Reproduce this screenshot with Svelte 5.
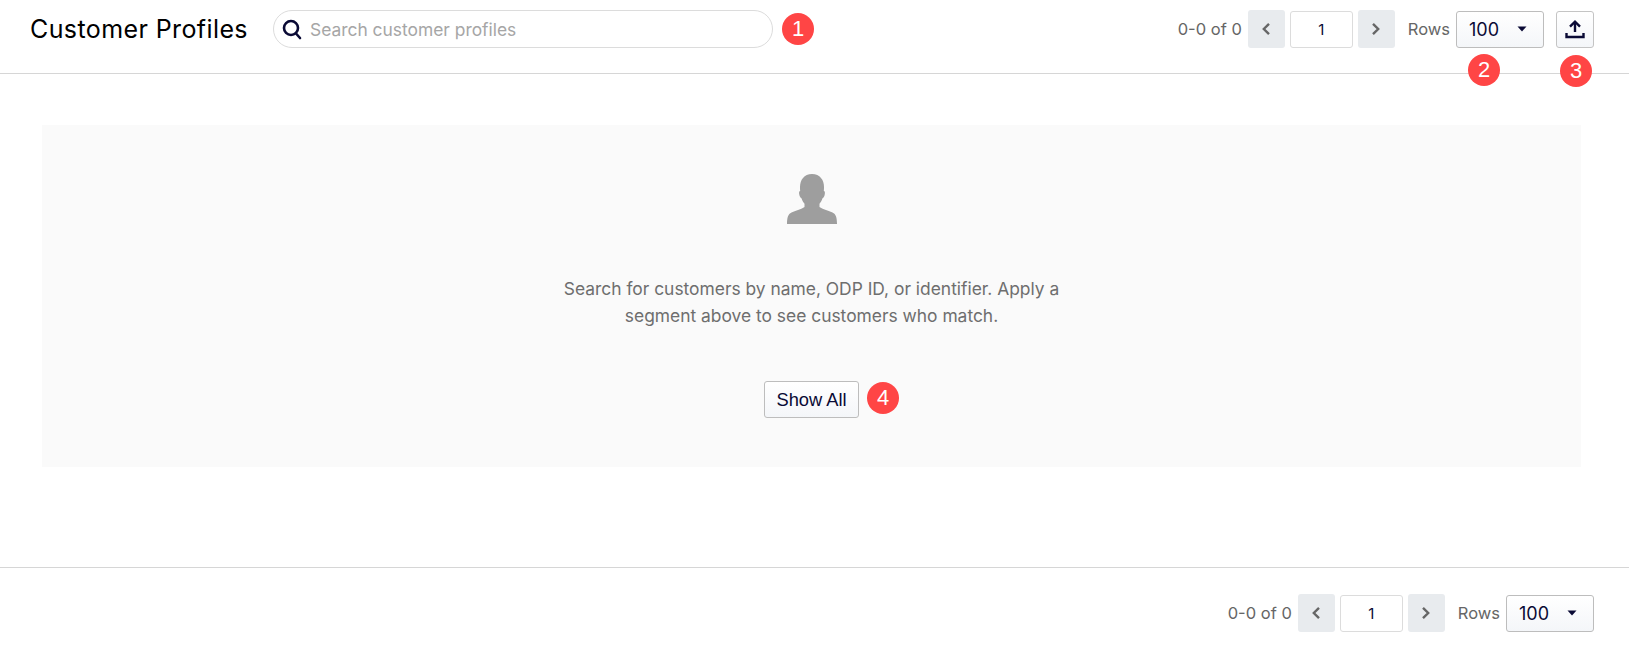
<script>
  const pager = { range: '0-0 of 0', page: 1, rows: 100 }
</script>

{#snippet pagination()}
  <span class="range">{pager.range}</span>
  <button class="step" aria-label="Previous page">
    <svg width="12" height="14" viewBox="0 0 12 14" fill="none" stroke="currentColor" stroke-width="2.4"><polyline points="9,1.800 3.800,7 9,12.200"></polyline></svg>
  </button>
  <input class="page-input" value={pager.page} aria-label="Page" />
  <button class="step" aria-label="Next page">
    <svg width="12" height="14" viewBox="0 0 12 14" fill="none" stroke="currentColor" stroke-width="2.4"><polyline points="3,1.800 8.200,7 3,12.200"></polyline></svg>
  </button>
  <span class="rows-label">Rows</span>
  <button class="select">
    <span>{pager.rows}</span>
    <svg width="10" height="6" viewBox="0 0 10 6"><path d="M0.5 0.5h9L5 5.5z" fill="#0a0a35"></path></svg>
  </button>
{/snippet}

<div class="page">
  <header class="toolbar">
    <h1>Customer Profiles</h1>
    <div class="search">
      <svg width="22" height="22" viewBox="0 0 22 22" fill="none" stroke="#0a0a35" stroke-width="2.6" stroke-linecap="round">
        <circle cx="10" cy="10" r="7"></circle>
        <line x1="15" y1="15.500" x2="19" y2="20"></line>
      </svg>
      <span class="placeholder">Search customer profiles</span>
      <span class="badge badge-1">1</span>
    </div>
    <div class="pager">
      {@render pagination()}
      <button class="upload" aria-label="Upload">
        <svg width="20" height="20" viewBox="0 0 20 20" fill="none" stroke="#0a0a35" stroke-width="2.400">
          <path d="M10 13V3"></path>
          <polyline points="5,7.600 10,2.600 15,7.600"></polyline>
          <path d="M1.500 14v4h17v-4"></path>
        </svg>
      </button>
      <span class="badge badge-2">2</span>
      <span class="badge badge-3">3</span>
    </div>
  </header>

  <main>
    <section class="empty">
      <svg class="person" width="50" height="50" viewBox="0 0 50 50">
        <path fill="#9e9e9e" d="M25 0c8 0 12 6 12 13 0 1 0 3-.2 4 1.200 0 1.500 2 .7 4.500-.5 1.500-1.200 2.500-2 2.800-.6 2.200-1.700 4-3 5.500v3.200c3 2 8 3.500 13 5.500C49 40 50 44 50 50H0c0-6 1-10 4.500-11.500 5-2 10-3.500 13-5.500v-3.200c-1.300-1.500-2.400-3.300-3-5.500-.8-.3-1.500-1.300-2-2.800-.8-2.500-.5-4.500.7-4.500-.2-1-.2-3-.2-4C13 6 17 0 25 0z"></path>
      </svg>
      <p>Search for customers by name, ODP ID, or identifier. Apply a segment above to see customers who match.</p>
      <div class="action">
        <button class="show-all">Show All</button>
        <span class="badge badge-4">4</span>
      </div>
    </section>
  </main>

  <footer class="bottom">
    <div class="pager">
      {@render pagination()}
    </div>
  </footer>
</div>

<style>
  :global(body) {
    background: #fff;
    font-family: Inter, "Liberation Sans", sans-serif;
    overflow: hidden;
  }

  .page {
    display: flex;
    flex-direction: column;
    height: 649px;
  }

  .toolbar {
    display: flex;
    align-items: flex-start;
    height: 74px;
    padding: 10px 35px 0 30px;
    box-sizing: border-box;
    border-bottom: 1px solid #d6d6d6;
    flex-shrink: 0;
  }

  h1 {
    margin: 0;
    width: 243px;
    font-size: 25px;
    line-height: 38px;
    font-weight: 400;
    color: #000;
    letter-spacing: 0.4px;
    white-space: nowrap;
  }

  .search {
    position: relative;
    display: flex;
    align-items: center;
    gap: 7px;
    width: 500px;
    height: 38px;
    padding-left: 7px;
    box-sizing: border-box;
    border: 1px solid #dcdcdc;
    border-radius: 19px;
  }

  .placeholder {
    font-size: 17.400px;
    color: #a6a6a6;
  }

  .pager {
    position: relative;
    display: flex;
    align-items: center;
    margin-left: auto;
    height: 38px;
    color: #666;
    font-size: 16.500px;
  }

  .range {
    margin-right: 6px;
    white-space: nowrap;
  }

  .step {
    display: flex;
    align-items: center;
    justify-content: center;
    width: 37px;
    height: 38px;
    padding: 0;
    border: none;
    border-radius: 3px;
    background: #e8ebee;
    color: #666;
  }

  .page-input {
    width: 63px;
    height: 37px;
    margin: 0 5px;
    padding: 0;
    box-sizing: border-box;
    border: 1px solid #dcdcdc;
    border-radius: 3px;
    background: #fff;
    text-align: center;
    color: #0a0a35;
    font: 400 15px Inter, sans-serif;
  }

  .rows-label {
    margin: 0 6px 0 13px;
  }

  .select {
    display: flex;
    align-items: center;
    justify-content: space-between;
    width: 88px;
    height: 37px;
    padding: 0 16px 0 12px;
    box-sizing: border-box;
    border: 1px solid #bdbdbd;
    border-radius: 3px;
    background: linear-gradient(#fff, #f4f6f9);
    color: #0a0a35;
    font: 400 18px Inter, sans-serif;
  }

  .upload {
    display: flex;
    align-items: center;
    justify-content: center;
    width: 38px;
    height: 37px;
    margin-left: 12px;
    padding: 0;
    border: 1px solid #c4c4c4;
    border-radius: 3px;
    background: linear-gradient(#fff, #f4f6f9);
  }

  main {
    flex: 1;
    padding: 51px 48px 0 42px;
  }

  .empty {
    display: flex;
    flex-direction: column;
    align-items: center;
    height: 342px;
    padding-top: 49px;
    box-sizing: border-box;
    background: #fafafa;
  }

  .person {
    display: block;
  }

  p {
    width: 510px;
    margin: 51px 0 0;
    text-align: center;
    font-size: 17.400px;
    line-height: 27px;
    color: #6e6e6e;
  }

  .action {
    position: relative;
    margin-top: 52px;
  }

  .show-all {
    display: block;
    width: 95px;
    height: 37px;
    padding: 0;
    border: 1px solid #bdbdbd;
    border-radius: 3px;
    background: linear-gradient(#fff, #f4f6f9);
    color: #0a0a35;
    font: 400 18.300px "Liberation Sans", sans-serif;
  }

  .bottom {
    display: flex;
    align-items: flex-start;
    height: 82px;
    padding: 26px 35px 0 0;
    box-sizing: border-box;
    border-top: 1px solid #d6d6d6;
    flex-shrink: 0;
  }

  /* numbered callouts sit on top of the screenshot */
  .badge {
    position: absolute;
    display: flex;
    align-items: center;
    justify-content: center;
    width: 32px;
    height: 32px;
    border-radius: 50%;
    background: #ff4545;
    color: #fff;
    font: 400 22px "Liberation Sans", sans-serif;
  }

  .badge-1 {
    left: 508px;
    top: 2px;
  }

  .badge-2 {
    right: 94px;
    top: 44px;
  }

  .badge-3 {
    right: 2px;
    top: 45px;
  }

  .badge-4 {
    left: 103px;
    top: 1px;
  }
</style>
